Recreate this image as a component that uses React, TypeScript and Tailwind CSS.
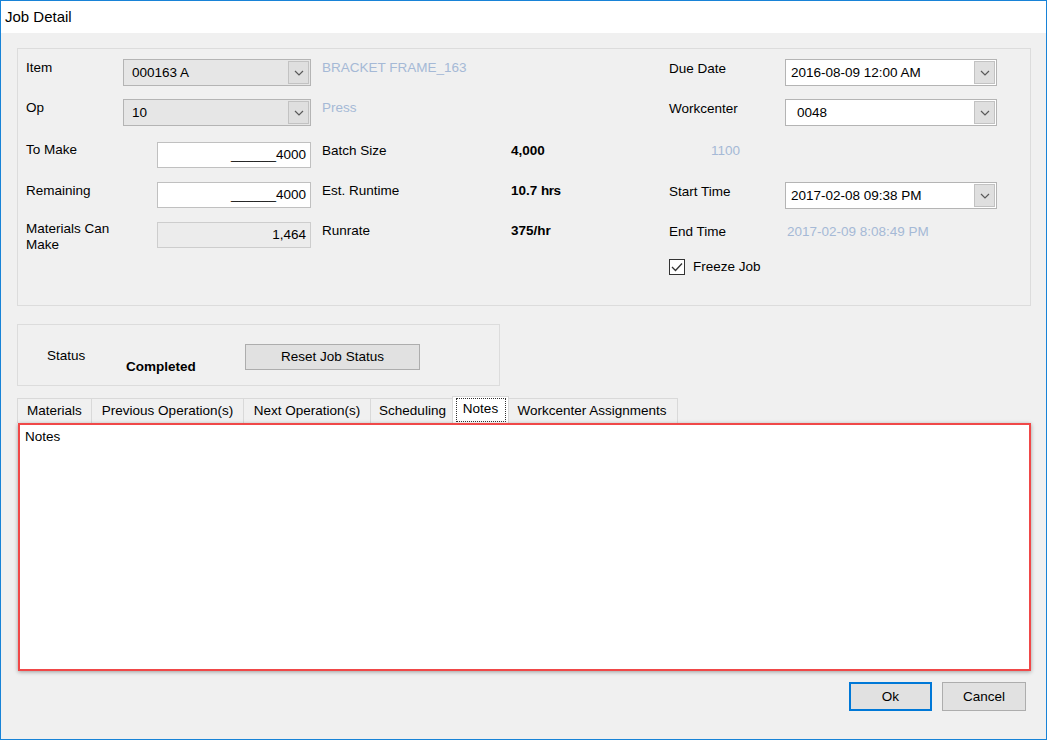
import React from "react";

function Chevron() {
  return (
    <svg width="10" height="6" viewBox="0 0 10 6" fill="none">
      <path d="M1 1 L5 5 L9 1" stroke="#5a5a5a" strokeWidth="1.2" />
    </svg>
  );
}

function Combo({ value, white, className, textClass }: { value: string; white?: boolean; className: string; textClass: string }) {
  return (
    <div
      className={`flex h-[27px] items-center border border-[#b4b4b4] ${white ? "bg-white" : "bg-[#e6e6e6]"} ${className}`}
    >
      <span className={`flex-1 text-black ${textClass}`}>{value}</span>
      <div className="mr-px flex h-[23px] w-[21px] items-center justify-center border border-[#c2c2c2] bg-[#dfdfdf]">
        <Chevron />
      </div>
    </div>
  );
}

function TextBox({ value, disabled }: { value: React.ReactNode; disabled?: boolean }) {
  return (
    <div
      className={`flex h-[26px] w-[154px] items-center justify-end border pr-[4px] ${
        disabled ? "border-[#cdcdcd] bg-[#ececec]" : "border-[#c0c0c0] bg-white"
      }`}
    >
      <span className="text-black">{value}</span>
    </div>
  );
}

const LIGHT = "text-[#a5b9d6]";

export default function App() {
  const tabs = [
    { t: "Materials", w: "w-[74px]" },
    { t: "Previous Operation(s)", w: "w-[152px]" },
    { t: "Next Operation(s)", w: "w-[127px]" },
    { t: "Scheduling", w: "w-[84px]" },
  ];
  return (
    <div className="flex h-[740px] w-[1047px] flex-col border border-[#1883d7] bg-[#f0f0f0] font-['Liberation_Sans',Arial,sans-serif] text-[13.5px] leading-4 text-black">
      {/* Title bar */}
      <div className="flex h-[32px] items-center bg-white pl-[4px] text-[15px]">Job Detail</div>

      <div className="flex flex-1 flex-col pl-[16px] pr-[15px]">
        {/* Main group box */}
        <div className="mt-[15px] h-[258px] border border-[#dcdcdc] pl-[8px] pt-[10px]">
          {/* Row 1 */}
          <div className="flex h-[27px]">
            <div className="flex w-[285px] justify-between">
              <span className="pt-px">Item</span>
              <Combo value="000163 A" className="w-[188px]" textClass="pl-[8px]" />
            </div>
            <div className={`ml-[11px] w-[347px] pt-px ${LIGHT}`}>BRACKET FRAME_163</div>
            <div className="flex">
              <span className="w-[116px] pt-[2px]">Due Date</span>
              <Combo value="2016-08-09 12:00 AM" white className="w-[212px]" textClass="pl-[5px]" />
            </div>
          </div>
          {/* Row 2 */}
          <div className="mt-[13px] flex h-[27px]">
            <div className="flex w-[285px] justify-between">
              <span className="pt-px">Op</span>
              <Combo value="10" className="w-[188px]" textClass="pl-[8px]" />
            </div>
            <div className={`ml-[11px] w-[347px] pt-px ${LIGHT}`}>Press</div>
            <div className="flex">
              <span className="w-[116px] pt-[2px]">Workcenter</span>
              <Combo value="0048" white className="w-[212px]" textClass="pl-[11px]" />
            </div>
          </div>
          {/* Row 3 */}
          <div className="mt-[16px] flex h-[26px]">
            <div className="flex w-[285px] justify-between">
              <span>To Make</span>
              <TextBox value={<>______4000</>} />
            </div>
            <div className="ml-[11px] flex w-[347px]">
              <span className="w-[189px] pt-px">Batch Size</span>
              <span className="pt-px font-bold">4,000</span>
            </div>
            <div className={`pl-[42px] pt-px ${LIGHT}`}>1100</div>
          </div>
          {/* Row 4 */}
          <div className="mt-[14px] flex h-[27px]">
            <div className="flex w-[285px] items-start justify-between">
              <span className="pt-px">Remaining</span>
              <TextBox value={<>______4000</>} />
            </div>
            <div className="ml-[11px] flex w-[347px]">
              <span className="w-[189px] pt-px">Est. Runtime</span>
              <span className="pt-px font-bold">
                10.7 <span className="tracking-[-0.5px]">hrs</span>
              </span>
            </div>
            <div className="flex">
              <span className="w-[116px] pt-[2px]">Start Time</span>
              <Combo value="2017-02-08 09:38 PM" white className="w-[212px]" textClass="pl-[5px]" />
            </div>
          </div>
          {/* Row 5 */}
          <div className="mt-[13px] flex h-[26px]">
            <div className="flex w-[285px] items-start justify-between">
              <span className="-mt-px">
                Materials Can
                <br />
                Make
              </span>
              <TextBox value="1,464" disabled />
            </div>
            <div className="ml-[11px] flex w-[347px]">
              <span className="w-[189px] pt-px">Runrate</span>
              <span className="pt-px font-bold">375/hr</span>
            </div>
            <div className="flex">
              <span className="w-[118px] pt-[2px]">End Time</span>
              <span className={`pt-[2px] ${LIGHT}`}>2017-02-09 8:08:49 PM</span>
            </div>
          </div>
          {/* Row 6 */}
          <div className="mt-[10px] flex h-[17px]">
            <div className="w-[643px]" />
            <div className="flex items-center">
              <div className="flex h-[16px] w-[16px] items-center justify-center border border-[#333] bg-white">
                <svg width="12" height="10" viewBox="0 0 12 10" fill="none">
                  <path d="M1 5 L4.5 8.5 L11 1.5" stroke="#333" strokeWidth="1.3" />
                </svg>
              </div>
              <span className="ml-[8px]">Freeze Job</span>
            </div>
          </div>
        </div>

        {/* Status box */}
        <div className="mt-[18px] flex h-[62px] w-[483px] items-start border border-[#dcdcdc] pl-[29px]">
          <span className="mt-[23px] w-[79px]">Status</span>
          <span className="mt-[34px] w-[119px] font-bold">Completed</span>
          <button className="mt-[19px] flex h-[26px] w-[175px] items-center justify-center border border-[#adadad] bg-[#e1e1e1]">
            Reset Job Status
          </button>
        </div>

        {/* Tabs */}
        <div className="mt-[10px] flex h-[27px] items-end">
          {tabs.map((x) => (
            <div
              key={x.t}
              className={`flex h-[25px] items-center justify-center border-l border-t border-[#d9d9d9] bg-[#f0f0f0] ${x.w}`}
            >
              {x.t}
            </div>
          ))}
          <div className="relative z-10 -mx-[2px] flex h-[27px] w-[57px] items-center justify-center border-x border-t border-[#d9d9d9] bg-white">
            <span className="flex h-[24px] w-[50px] items-center justify-center border border-dotted border-[#333] pb-[2px]">
              Notes
            </span>
          </div>
          <div className="flex h-[25px] w-[171px] items-center justify-center border-r border-t border-[#d9d9d9] bg-[#f0f0f0]">
            Workcenter Assignments
          </div>
        </div>

        {/* Notes area */}
        <div className="relative z-20 ml-px h-[248px] w-[1013px] border-2 border-[#f04848] bg-white px-[5px] pt-[4px] shadow-[0_1px_4px_rgba(0,0,0,0.35)]">
          Notes
        </div>

        {/* Buttons */}
        <div className="mr-[5px] mt-[11px] flex justify-end gap-[10px]">
          <button className="flex h-[29px] w-[83px] items-center justify-center border-2 border-[#0078d7] bg-[#e1e1e1]">
            Ok
          </button>
          <button className="flex h-[29px] w-[84px] items-center justify-center border border-[#adadad] bg-[#e1e1e1]">
            Cancel
          </button>
        </div>
      </div>
    </div>
  );
}
